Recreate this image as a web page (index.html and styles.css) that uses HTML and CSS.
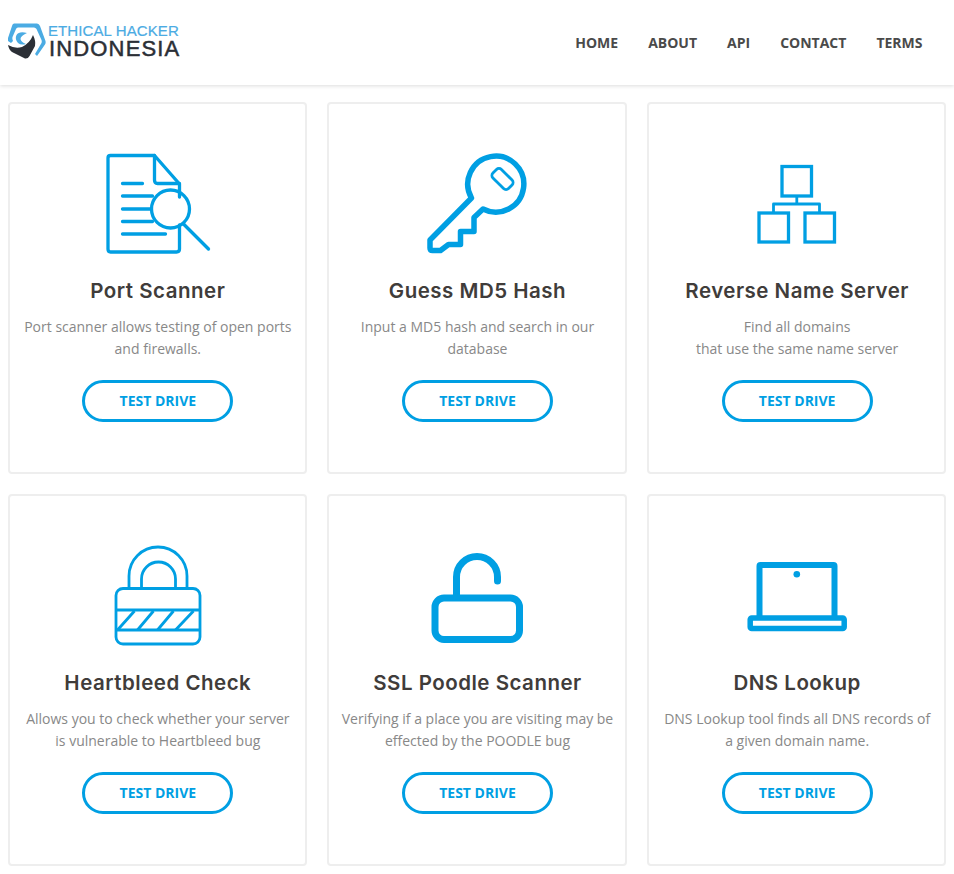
FILE: index.html
```html
<!DOCTYPE html>
<html lang="en">
<head>
<meta charset="utf-8">
<title>Ethical Hacker Indonesia</title>
<link rel="stylesheet" href="styles.css">
</head>
<body>
<header class="topbar">
  <a class="logo" href="#">
    <svg class="logo-mark" viewBox="8 23 38 37" width="38" height="37" aria-hidden="true">
      <path class="logo-blue" d="M14 23.500 H37 Q39 23.500 40 26 L45.500 41 Q46 43 45 44.500 L37 56 L35 54 L41.500 43 Q42 41.500 41.500 40 L36.500 29 Q35.500 27.500 34 27.500 H18 Q16.500 27.500 16 29 L12.500 37 Q12 39 13 41 L11 43 L8 41 Q7.500 39.500 8 38 L12 26 Q12.500 23.500 14 23.500 Z"/>
      <path class="logo-blue" d="M27 33 Q19 31 16.500 35 Q14.500 39 18 43 Q21 45.500 26 44 Q21 42 20.500 39 Q20.500 36 27 33 Z"/>
      <path class="logo-dark" d="M8 45 Q15 49 22 47 Q30 43 33 35 Q36 41 35 46 L29.500 56 Q28 59 25 58.500 L12 52 Q9 50 8 45 Z"/>
    </svg>
    <span class="logo-text">
      <span class="logo-top">ETHICAL HACKER</span>
      <span class="logo-bottom">INDONESIA</span>
    </span>
  </a>
  <nav class="nav">
    <a href="#">HOME</a>
    <a href="#">ABOUT</a>
    <a href="#">API</a>
    <a href="#">CONTACT</a>
    <a href="#">TERMS</a>
  </nav>
</header>
<main class="grid">
  <section class="card">
    <svg class="icon" viewBox="92.500 148 130 110" aria-hidden="true">
      <g class="st3">
        <path d="M179 197 V184 L154 155.500 H110 Q107.500 155.500 107.500 158 V249 Q107.500 252 110 252 H176 Q179 252 179 249 V225"/>
        <path d="M154 155.500 V180 Q154 183.500 157 183.500 H179"/>
        <path d="M122 183.500 H142 M122 196 H152 M122 209 H151 M122 221.500 H152 M122 234 H165"/>
        <circle cx="170" cy="209" r="19"/>
        <path d="M183 224 L208 249"/>
      </g>
    </svg>
    <h2>Port Scanner</h2>
    <p>Port scanner allows testing of open ports<br>and firewalls.</p>
    <a class="btn" href="#">TEST DRIVE</a>
  </section>
  <section class="card">
    <svg class="icon" viewBox="412.500 148 130 110" aria-hidden="true">
      <path class="st5" d="M472 198 A28 28 0 1 1 483.500 209 L474.500 217.500 V231.500 H461 V244.500 H449 L441 250.500 H433 Q430.500 250.500 430.500 248 V240 Z"/>
      <rect class="st25" x="492" y="173" width="22" height="12" rx="3.500" transform="rotate(45 503 179)"/>
    </svg>
    <h2>Guess MD5 Hash</h2>
    <p>Input a MD5 hash and search in our<br>database</p>
    <a class="btn" href="#">TEST DRIVE</a>
  </section>
  <section class="card">
    <svg class="icon" viewBox="732.500 148 130 110" aria-hidden="true">
      <g class="sq">
        <rect x="782.500" y="166.500" width="29.500" height="29.500"/>
        <rect x="759.500" y="213" width="29.500" height="29"/>
        <rect x="805.500" y="213" width="29.500" height="29"/>
      </g>
      <path class="st25 sq" d="M797.300 197 V204 M774 212 V204 H820 V212"/>
    </svg>
    <h2>Reverse Name Server</h2>
    <p>Find all domains<br>that use the same name server</p>
    <a class="btn" href="#">TEST DRIVE</a>
  </section>
  <section class="card">
    <svg class="icon" viewBox="92.500 540 130 110" aria-hidden="true">
      <g class="st25">
        <rect x="115.500" y="588.500" width="84" height="55.500" rx="7"/>
        <path d="M115.500 610 H199.500 M115.500 630 H199.500"/>
        <path d="M117 630 L134 611 M137 630 L153 611 M157 630 L173 611 M175 630 L193 611"/>
        <path d="M128.500 588 V576 A29 29 0 0 1 186.500 576 V588"/>
        <path d="M141 588 V579 A17 17 0 0 1 175 579 V588"/>
      </g>
    </svg>
    <h2>Heartbleed Check</h2>
    <p>Allows you to check whether your server<br>is vulnerable to Heartbleed bug</p>
    <a class="btn" href="#">TEST DRIVE</a>
  </section>
  <section class="card">
    <svg class="icon" viewBox="412.500 540 130 110" aria-hidden="true">
      <g class="st7">
        <rect x="435.500" y="598" width="84.500" height="41.500" rx="9"/>
        <path d="M457 596 V577 A20.500 20.500 0 0 1 498 577 V581"/>
      </g>
    </svg>
    <h2>SSL Poodle Scanner</h2>
    <p>Verifying if a place you are visiting may be<br>effected by the POODLE bug</p>
    <a class="btn" href="#">TEST DRIVE</a>
  </section>
  <section class="card">
    <svg class="icon" viewBox="732.500 540 130 110" aria-hidden="true">
      <path class="st6" d="M760 617 V566 Q760 565 761 565 H834 Q835 565 835 566 V617"/>
      <rect class="st55" x="750.700" y="618" width="94" height="10.500" rx="1.500"/>
      <circle class="dot" cx="797.300" cy="574.300" r="3.300"/>
    </svg>
    <h2>DNS Lookup</h2>
    <p>DNS Lookup tool finds all DNS records of<br>a given domain name.</p>
    <a class="btn" href="#">TEST DRIVE</a>
  </section>
</main>
</body>
</html>
```
FILE: styles.css
```css
* { box-sizing: border-box; }

html, body {
  margin: 0;
  background: #fff;
}

body {
  font-family: "Open Sans", "Liberation Sans", sans-serif;
  color: #888;
}

a { text-decoration: none; }

.topbar {
  height: 85px;
  padding: 0 31.500px 0 8px;
  display: flex;
  align-items: center;
  justify-content: space-between;
  background: #fff;
  box-shadow: 0 1px 4px rgba(0, 0, 0, 0.14);
}

.logo {
  display: flex;
  align-items: center;
  gap: 2px;
  margin-top: -2px;
}

.logo-mark { display: block; flex: none; }
.logo-blue { fill: #4babe3; }
.logo-dark { fill: #2b2f36; }

.logo-text {
  display: flex;
  flex-direction: column;
  font-family: "Liberation Sans", sans-serif;
}

.logo-top {
  font-size: 15px;
  line-height: 14px;
  color: #4babe3;
  letter-spacing: 0.1px;
  -webkit-text-stroke: 0.2px #4babe3;
}

.logo-bottom {
  font-size: 22px;
  line-height: 22px;
  color: #2b2f36;
  letter-spacing: 1.15px;
  margin-left: 1px;
  -webkit-text-stroke: 0.5px #2b2f36;
}

.nav {
  display: flex;
  gap: 30px;
}

.nav a {
  font-size: 14px;
  font-weight: 700;
  line-height: 20px;
  color: #4a4a4a;
}

.grid {
  padding: 17px 7.500px 8px;
  display: grid;
  grid-template-columns: repeat(3, 1fr);
  gap: 20px;
}

.card {
  height: 372px;
  padding: 44px 10px 0 11px;
  display: flex;
  flex-direction: column;
  align-items: center;
  border: 2px solid #eee;
  border-radius: 4px;
  text-align: center;
}

.icon {
  display: block;
  width: 130px;
  height: 110px;
  flex: none;
}

.icon * { fill: none; stroke: #009fe3; }
.icon .dot { fill: #009fe3; stroke: none; }

.st3 { stroke-width: 3.300px; stroke-linejoin: round; stroke-linecap: round; }
.st25 { stroke-width: 2.800px; stroke-linejoin: round; }
.st5 { stroke-width: 5.500px; stroke-linejoin: round; }
.st6 { stroke-width: 6px; }
.st55 { stroke-width: 5.500px; stroke-linejoin: round; }
.st7 { stroke-width: 7px; stroke-linecap: round; }
.sq { stroke-width: 3.300px; }
.st25.sq { stroke-width: 2.800px; }

.card h2 {
  margin: 21px 0 0;
  font-family: Inter, "Liberation Sans", sans-serif;
  font-size: 20.500px;
  font-weight: 600;
  line-height: 24px;
  letter-spacing: 0.5px;
  color: #403c3a;
  white-space: nowrap;
}

.card p {
  margin: 13px 0 0;
  font-size: 14px;
  line-height: 22px;
  color: #888;
  white-space: nowrap;
}

.btn {
  margin-top: 20px;
  width: 151px;
  height: 42px;
  padding-bottom: 2px;
  display: flex;
  align-items: center;
  justify-content: center;
  border: 3px solid #009fe3;
  border-radius: 21px;
  font-size: 14px;
  font-weight: 700;
  color: #009fe3;
}
```
